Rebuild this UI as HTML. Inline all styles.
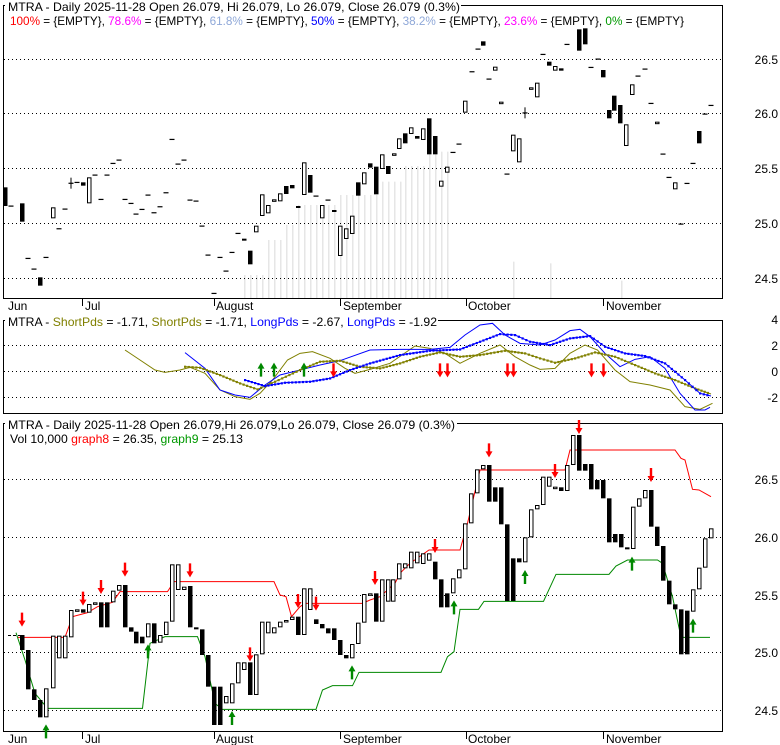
<!DOCTYPE html>
<html><head><meta charset="utf-8"><style>
html,body{margin:0;padding:0;background:#fff;}
svg{display:block;font-family:"Liberation Sans",Arial,sans-serif;}
</style></head><body>
<svg id="s" width="780" height="745" viewBox="0 0 780 745" xmlns="http://www.w3.org/2000/svg">
<rect width="780" height="745" fill="#fff"/>
<g id="vol"></g>
<rect x="3.5" y="5.5" width="719" height="293" fill="none" stroke="#000"/>
<rect x="3.5" y="320.5" width="719" height="93" fill="none" stroke="#000"/>
<rect x="3.5" y="423.5" width="719" height="308" fill="none" stroke="#000"/>
<g stroke="#000" stroke-dasharray="1,3">
<line x1="4" y1="59.5" x2="722" y2="59.5"/><line x1="4" y1="113.5" x2="722" y2="113.5"/><line x1="4" y1="168.5" x2="722" y2="168.5"/><line x1="4" y1="223.5" x2="722" y2="223.5"/><line x1="4" y1="278.5" x2="722" y2="278.5"/>
<line x1="4" y1="345.5" x2="722" y2="345.5"/><line x1="4" y1="371.5" x2="722" y2="371.5"/><line x1="4" y1="397.5" x2="722" y2="397.5"/>
<line x1="4" y1="479.5" x2="722" y2="479.5"/><line x1="4" y1="537.5" x2="722" y2="537.5"/><line x1="4" y1="595.5" x2="722" y2="595.5"/><line x1="4" y1="652.5" x2="722" y2="652.5"/><line x1="4" y1="710.5" x2="722" y2="710.5"/>
</g>
<g id="p1"></g><g id="p2"></g><g id="p3"></g>
<rect x="5" y="0" width="456" height="13" fill="#fff"/>
<text x="8" y="11" font-size="12" textLength="452" lengthAdjust="spacingAndGlyphs">MTRA - Daily 2025-11-28 Open 26.079, Hi 26.079, Lo 26.079, Close 26.079 (0.3%)</text>
<text x="10" y="25" font-size="12" textLength="674" lengthAdjust="spacingAndGlyphs"><tspan fill="#ff0000">100%</tspan> = {EMPTY}, <tspan fill="#ff00ff">78.6%</tspan> = {EMPTY}, <tspan fill="#8fa8d8">61.8%</tspan> = {EMPTY}, <tspan fill="#0000ff">50%</tspan> = {EMPTY}, <tspan fill="#8fa8d8">38.2%</tspan> = {EMPTY}, <tspan fill="#ff00ff">23.6%</tspan> = {EMPTY}, <tspan fill="#009900">0%</tspan> = {EMPTY}</text>
<rect x="5" y="314" width="433" height="13" fill="#fff"/>
<text x="8" y="326" font-size="12" textLength="429" lengthAdjust="spacingAndGlyphs">MTRA - <tspan fill="#808000">ShortPds</tspan> = -1.71, <tspan fill="#808000">ShortPds</tspan> = -1.71, <tspan fill="#0000ff">LongPds</tspan> = -2.67, <tspan fill="#0000ff">LongPds</tspan> = -1.92</text>
<rect x="5" y="417" width="452" height="13" fill="#fff"/>
<text x="8" y="429" font-size="12" textLength="447" lengthAdjust="spacingAndGlyphs">MTRA - Daily 2025-11-28 Open 26.079,Hi 26.079,Lo 26.079, Close 26.079 (0.3%)</text>
<text x="10" y="443" font-size="12" textLength="233" lengthAdjust="spacingAndGlyphs">Vol 10,000 <tspan fill="#ff0000">graph8</tspan> = 26.35, <tspan fill="#009900">graph9</tspan> = 25.13</text>
<g font-size="12" text-anchor="end">
<text x="778" y="64">26.5</text><text x="778" y="118">26.0</text><text x="778" y="173">25.5</text><text x="778" y="228">25.0</text><text x="778" y="283">24.5</text>
<text x="778" y="324">4</text><text x="778" y="350">2</text><text x="778" y="376">0</text><text x="778" y="402">-2</text>
<text x="778" y="484">26.5</text><text x="778" y="542">26.0</text><text x="778" y="600">25.5</text><text x="778" y="657">25.0</text><text x="778" y="715">24.5</text>
</g>
<g font-size="12">
<text x="8" y="310">Jun</text><text x="85" y="310">Jul</text><text x="216" y="310">August</text><text x="343" y="310">September</text><text x="468" y="310">October</text><text x="606" y="310">November</text>
<text x="8" y="743">Jun</text><text x="85" y="743">Jul</text><text x="216" y="743">August</text><text x="343" y="743">September</text><text x="468" y="743">October</text><text x="606" y="743">November</text>
</g>
<g stroke="#000">
<line x1="82.5" y1="298" x2="82.5" y2="306"/><line x1="214.5" y1="298" x2="214.5" y2="306"/><line x1="340.5" y1="298" x2="340.5" y2="306"/><line x1="466.5" y1="298" x2="466.5" y2="306"/><line x1="603.5" y1="298" x2="603.5" y2="306"/>
<line x1="82.5" y1="731" x2="82.5" y2="739"/><line x1="214.5" y1="731" x2="214.5" y2="739"/><line x1="340.5" y1="731" x2="340.5" y2="739"/><line x1="466.5" y1="731" x2="466.5" y2="739"/><line x1="603.5" y1="731" x2="603.5" y2="739"/>
</g>
</svg>
<script>
var NS="http://www.w3.org/2000/svg";
function el(g,t,a){var e=document.createElementNS(NS,t);for(var k in a)e.setAttribute(k,a[k]);document.getElementById(g).appendChild(e);return e;}
var vols=[[488,525,825],[536,565,720],[572,590,675],[596,675,615],[680,760,585],[764,800,545],[810,850,498],[858,898,455],[1026,1026,785],[1100,1100,790],[1242,1242,842]];
vols.forEach(function(v){for(var x=v[0];x<=v[1];x+=12){el("vol","rect",{x:x/2,y:v[2]/3,width:1.5,height:298-v[2]/3,fill:"#e6e6e6"});}});
var c1=[[10,562,618,'b'],[22,618,618,'d'],[44,610,665,'b'],[56,775,775,'d'],[68,807,807,'d'],[80,832,857,'b'],[92,772,772,'d'],[106,622,655,'w'],[118,686,686,'d'],[130,627,627,'d'],[142,548,553,'c'],[154,547,547,'d'],[166,547,557,'b'],[178,532,610,'w'],[190,525,525,'d'],[202,598,598,'d'],[214,525,525,'d'],[226,490,490,'d'],[238,480,480,'d'],[250,598,598,'d'],[262,610,610,'d'],[272,642,642,'d'],[284,628,628,'d'],[296,585,585,'d'],[308,638,638,'d'],[320,620,620,'d'],[332,578,578,'d'],[344,418,418,'d'],[356,492,492,'d'],[368,480,480,'d'],[380,600,600,'d'],[392,603,603,'d'],[404,678,678,'d'],[416,765,765,'d'],[428,880,880,'d'],[440,772,772,'d'],[452,813,813,'d'],[464,757,757,'d'],[476,700,700,'d'],[488,716,722,'b'],[500,752,793,'b'],[512,677,697,'w'],[524,583,648,'w'],[536,615,640,'w'],[548,598,604,'w'],[560,580,604,'w'],[572,558,582,'b'],[584,555,565,'b'],[596,618,622,'b'],[608,487,585,'w'],[620,525,578,'b'],[632,588,588,'d'],[644,615,655,'w'],[656,600,600,'d'],[668,630,634,'b'],[680,677,768,'w'],[692,685,717,'w'],[704,647,702,'w'],[716,547,587,'b'],[728,517,553,'w'],[740,490,503,'b'],[752,500,583,'b'],[764,463,507,'w'],[776,498,522,'b'],[788,460,466,'w'],[798,415,447,'w'],[810,400,430,'b'],[822,382,402,'w'],[834,408,416,'b'],[846,385,420,'w'],[858,355,463,'b'],[870,408,463,'b'],[882,542,560,'w'],[894,500,518,'w'],[906,457,457,'d'],[918,432,432,'d'],[930,302,338,'w'],[944,215,215,'d'],[956,147,147,'d'],[966,124,137,'b'],[978,237,237,'d'],[990,200,212,'w'],[1002,305,312,'w'],[1014,522,522,'d'],[1026,404,454,'w'],[1038,415,487,'w'],[1050,337,337,'c'],[1062,262,268,'w'],[1074,248,292,'w'],[1086,163,163,'d'],[1098,185,197,'b'],[1110,198,212,'w'],[1122,205,212,'b'],[1134,133,133,'d'],[1158,88,152,'b'],[1170,85,133,'b'],[1182,202,202,'d'],[1196,177,177,'d'],[1206,210,232,'b'],[1218,330,355,'b'],[1228,287,332,'b'],[1240,315,370,'b'],[1252,373,438,'w'],[1264,253,285,'w'],[1276,228,228,'d'],[1290,207,207,'d'],[1302,310,310,'d'],[1314,365,372,'w'],[1326,462,462,'d'],[1338,532,532,'d'],[1350,547,568,'w'],[1362,672,672,'d'],[1374,550,550,'d'],[1386,490,490,'d'],[1398,393,430,'b'],[1410,342,342,'d'],[1422,316,316,'d']];
c1.forEach(function(c){var x=c[0]/2,t=c[1]/3,b=c[2]/3;
 if(c[3]=='d'){el("p1","rect",{x:x-2.5,y:t-0.5,width:5,height:1.2,fill:"#000"});}
 else if(c[3]=='c'){el("p1","rect",{x:x-2.5,y:t,width:5,height:1.2,fill:"#000"});el("p1","rect",{x:x-0.5,y:t-5,width:1,height:11,fill:"#000"});}
 else if(c[3]=='b'){el("p1","rect",{x:x-2,y:t,width:4.5,height:Math.max(b-t,2),fill:"#000"});}
 else {el("p1","rect",{x:x-1.5,y:t+0.5,width:3.5,height:Math.max(b-t-1,1.5),fill:"#fff",stroke:"#000","stroke-width":1});}
});
function pl(g,pts,col,w,dot){var d=pts.map(function(p){return (p[0]/2)+","+(310+p[1]/3);}).join(" ");
 el(g,"polyline",{points:d,fill:"none",stroke:col,"stroke-width":w});
 if(dot){for(var i=0;i<pts.length-1;i++){var a=pts[i],b=pts[i+1];var x0=a[0]/2,y0=310+a[1]/3,x1=b[0]/2,y1=310+b[1]/3;var n=Math.max(1,Math.round((x1-x0)/3.5));for(var j=0;j<n;j++){var xx=x0+(x1-x0)*j/n,yy=y0+(y1-y0)*j/n;el(g,"rect",{x:xx-1,y:yy-1,width:2.2,height:2.2,fill:col});}}}}
pl("p2",[[250,120],[280,150],[310,180],[330,187],[360,180],[380,172],[410,190],[440,240],[470,260],[500,268],[520,250],[545,210],[575,150],[600,130],[625,125],[660,145],[690,175],[710,190],[740,178],[780,160],[830,108],[860,115],[890,130],[920,160],[960,130],[1000,105],[1030,140],[1060,165],[1080,178],[1110,175],[1140,130],[1170,105],[1195,120],[1230,180],[1260,215],[1300,225],[1340,240],[1370,290],[1400,298],[1425,280]],"#808000",1,false);
pl("p2",[[370,128],[410,175],[440,240],[470,255],[500,262],[530,225],[560,195],[600,180],[640,165],[680,152],[740,120],[800,118],[860,118],[900,112],[930,75],[960,45],[985,40],[1010,75],[1040,100],[1080,105],[1110,90],[1140,62],[1160,58],[1180,80],[1210,130],[1240,170],[1270,148],[1300,140],[1330,175],[1360,250],[1390,300],[1410,300],[1420,292]],"#0000ff",1,false);
pl("p2",[[370,170],[400,173],[440,195],[480,220],[515,238],[550,215],[600,180],[640,155],[680,152],[720,170],[760,175],[800,160],[840,140],[880,127],[920,140],[960,135],[1010,122],[1050,130],[1080,145],[1110,158],[1150,145],[1190,127],[1230,140],[1270,165],[1310,190],[1350,210],[1390,235],[1422,252]],"#808000",1,true);
pl("p2",[[490,210],[530,228],[570,218],[620,215],[660,205],[700,180],[740,160],[800,135],[860,122],[920,118],[960,95],[1000,72],[1030,75],[1060,95],[1100,105],[1140,85],[1180,78],[1210,110],[1250,130],[1290,138],[1330,160],[1370,210],[1400,250],[1422,258]],"#0000ff",1,true);
function up(g,x,yb){el(g,"polygon",{points:(x-3.5)+","+(yb-8)+" "+x+","+(yb-14)+" "+(x+3.5)+","+(yb-8)+" "+(x+1.2)+","+(yb-8)+" "+(x+1.2)+","+yb+" "+(x-1.2)+","+yb+" "+(x-1.2)+","+(yb-8),fill:"#008800"});}
function dn(g,x,yt){el(g,"polygon",{points:(x-1.2)+","+yt+" "+(x+1.2)+","+yt+" "+(x+1.2)+","+(yt+8)+" "+(x+3.5)+","+(yt+8)+" "+x+","+(yt+14)+" "+(x-3.5)+","+(yt+8)+" "+(x-1.2)+","+(yt+8),fill:"#ff0000"});}
[522,548,608].forEach(function(x){up("p2",x/2,310+200/3);});
[667,880,895,1015,1027,1183,1207].forEach(function(x){dn("p2",x/2,310+160/3);});
var c3=[[44,585,630,'b'],[56,630,748,'b'],[68,748,780,'b'],[80,780,832,'b'],[92,745,832,'w'],[106,587,745,'w'],[118,587,655,'w'],[130,587,655,'w'],[142,510,592,'w'],[154,508,512,'w'],[166,508,518,'b'],[178,492,518,'w'],[190,487,492,'w'],[202,487,562,'b'],[214,487,562,'b'],[226,452,487,'w'],[238,435,452,'w'],[250,435,562,'b'],[262,562,575,'b'],[272,575,610,'b'],[284,590,610,'b'],[296,550,592,'w'],[308,550,610,'b'],[320,585,608,'w'],[332,545,585,'w'],[344,373,545,'w'],[356,373,450,'w'],[368,440,450,'w'],[380,438,562,'b'],[392,562,568,'b'],[404,568,645,'b'],[416,645,740,'b'],[428,740,855,'b'],[440,740,855,'b'],[452,768,790,'w'],[464,730,790,'w'],[476,667,730,'w'],[488,667,690,'w'],[500,667,765,'b'],[512,643,765,'w'],[524,545,643,'w'],[536,545,580,'w'],[548,562,580,'w'],[560,545,562,'w'],[572,540,545,'w'],[584,530,540,'w'],[596,530,585,'b'],[608,445,585,'w'],[620,445,510,'w'],[632,538,552,'b'],[644,552,565,'b'],[656,565,580,'b'],[668,565,600,'b'],[680,600,645,'b'],[692,645,655,'b'],[704,612,655,'w'],[716,548,612,'w'],[728,462,548,'w'],[740,460,462,'w'],[752,460,545,'b'],[764,418,545,'w'],[776,418,485,'w'],[786,418,485,'w'],[798,370,418,'w'],[810,370,385,'w'],[822,335,385,'w'],[834,335,370,'w'],[846,340,372,'w'],[858,340,362,'w'],[870,365,418,'b'],[882,418,502,'b'],[894,460,502,'b'],[906,415,460,'w'],[918,388,415,'w'],[930,250,388,'w'],[942,160,250,'w'],[954,88,160,'w'],[966,75,88,'w'],[978,75,185,'b'],[990,142,185,'b'],[1002,142,253,'b'],[1014,253,483,'b'],[1026,355,483,'b'],[1038,355,367,'b'],[1050,292,367,'w'],[1062,208,292,'w'],[1074,195,208,'w'],[1086,110,195,'w'],[1098,110,140,'w'],[1110,140,142,'w'],[1122,142,153,'b'],[1134,75,153,'w'],[1146,-15,75,'w'],[1158,-15,92,'b'],[1170,72,92,'b'],[1182,72,148,'b'],[1194,120,148,'b'],[1206,120,175,'b'],[1218,175,307,'b'],[1230,282,307,'b'],[1242,282,322,'b'],[1254,322,327,'b'],[1266,200,327,'w'],[1278,175,200,'w'],[1290,150,175,'w'],[1302,150,260,'b'],[1314,260,318,'b'],[1326,318,422,'b'],[1338,422,493,'b'],[1350,493,508,'b'],[1362,508,643,'b'],[1374,512,643,'b'],[1386,448,515,'w'],[1398,383,448,'w'],[1410,295,383,'w'],[1422,265,295,'w']];
function pl3(pts,col){el("p3","polyline",{points:pts.map(function(p){return (p[0]/2)+","+(440+p[1]/3);}).join(" "),fill:"none",stroke:col,"stroke-width":1});}
pl3([[35,592],[130,592],[145,530],[175,518],[195,500],[225,487],[240,455],[335,455],[348,425],[548,425],[560,465],[572,470],[583,530],[600,500],[610,490],[725,490],[740,480],[760,470],[790,430],[800,400],[820,370],[858,330],[920,330],[935,250],[960,90],[1130,90],[1140,30],[1350,30],[1362,55],[1370,60],[1385,148],[1398,150],[1422,170]],"#ff0000");
pl3([[32,578],[50,660],[70,760],[95,805],[285,805],[300,610],[330,590],[395,590],[410,650],[430,790],[445,808],[632,808],[645,750],[665,737],[705,737],[718,697],[882,697],[895,650],[908,635],[920,508],[957,508],[968,484],[1087,484],[1112,403],[1218,403],[1232,378],[1255,360],[1315,360],[1325,370],[1345,470],[1362,592],[1420,592]],"#008800");
el("p3","line",{x1:8,y1:635.5,x2:20,y2:635.5,stroke:"#000","stroke-dasharray":"3,2"});
c3.forEach(function(c){var x=c[0]/2,t=440+c[1]/3,b=440+c[2]/3;
 if(c[3]=='b'){el("p3","rect",{x:x-2,y:t,width:4.5,height:Math.max(b-t,2),fill:"#000"});}
 else {el("p3","rect",{x:x-1.5,y:t+0.5,width:3.5,height:Math.max(b-t-1,1.5),fill:"#fff",stroke:"#000","stroke-width":1});}
});
[[44,518],[166,455],[202,420],[250,368],[380,370],[500,622],[596,462],[632,470],[750,393],[870,297],[978,10],[1110,72],[1302,84],[1158,-60]].forEach(function(a){dn("p3",a[0]/2,440+a[1]/3);});
[[92,895],[296,655],[464,855],[704,718],[908,523],[1050,432],[1264,392],[1386,578]].forEach(function(a){up("p3",a[0]/2,440+a[1]/3);});
</script>
</body></html>
